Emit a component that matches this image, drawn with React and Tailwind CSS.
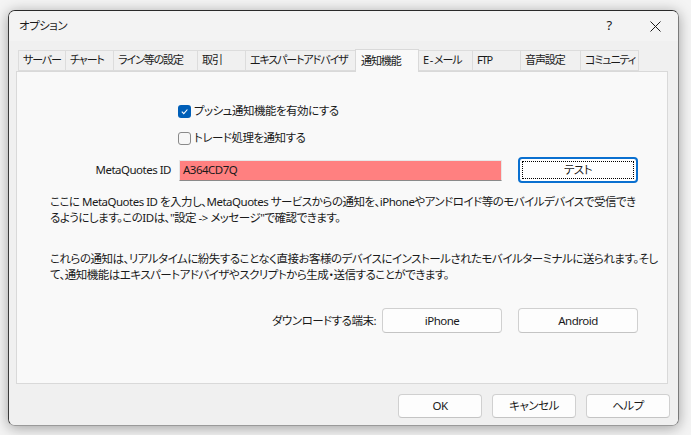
import React from "react";

const tabs = [
  { label: "サーバー", w: "w-[48px]" },
  { label: "チャート", w: "w-[49px]" },
  { label: "ライン等の設定", w: "w-[85px]" },
  { label: "取引", w: "w-[49px]" },
  { label: "エキスパートアドバイザ", w: "w-[111px]" },
  { label: "通知機能", w: "w-[64px]", active: true },
  { label: "E - メール", w: "w-[55px]" },
  { label: "FTP", w: "w-[49px]" },
  { label: "音声設定", w: "w-[61px]" },
  { label: "コミュニティ", w: "w-[59px]" },
];

const Checkbox = ({ checked, label }) => (
  <div className="flex items-center h-[20px] gap-[3px]">
    {checked ? (
      <div className="w-[13px] h-[13px] rounded-[3px] bg-[#005fb8] flex items-center justify-center">
        <svg width="9" height="9" viewBox="0 0 10 10">
          <path d="M2 5.2 L4.2 7.4 L8.2 2.8" fill="none" stroke="white" strokeWidth="1.2" />
        </svg>
      </div>
    ) : (
      <div className="w-[13px] h-[13px] rounded-[3px] border border-[#8a8a8a] bg-[#f7f7f7]" />
    )}
    <span>{label}</span>
  </div>
);

const Btn = ({ children, w = "w-[120px]", h = "h-[25px]" }) => (
  <div
    className={`${w} ${h} flex items-center justify-center rounded-[4px] border border-[#d0d0d0] border-b-[#c4c4c4] bg-[#fdfdfd] text-[#1a1a1a]`}
  >
    {children}
  </div>
);

const App = () => {
  return (
    <div
      className="w-[691px] h-[435px] bg-[#f4f4f4] overflow-hidden pt-[10px] pl-[8px] text-[11.5px] tracking-[-0.5px] text-[#1a1a1a] [font-feature-settings:'palt']"
      style={{ fontFamily: '"Noto Sans", "Noto Sans CJK JP", sans-serif' }}
    >
      {/* Dialog window */}
      <div className="w-[671px] h-[416px] flex flex-col rounded-[7px] overflow-hidden border border-t-[#2a2a2a] border-l-[#3a3a3a] border-r-[#7a7a7a] border-b-[#9a9a9a] shadow-[0_2px_14px_rgba(0,0,0,0.35)]">
        {/* Title bar */}
        <div className="h-[30px] bg-[#f3f3f3] flex items-center shrink-0">
          <span className="pl-[10px] flex-1">オプション</span>
          <div className="w-[46px] h-full flex items-center justify-center text-[13px]">?</div>
          <div className="w-[46px] h-full flex items-center justify-center">
            <svg width="11" height="11" viewBox="0 0 11 11">
              <path d="M0.5 0.5 L10.5 10.5 M10.5 0.5 L0.5 10.5" stroke="#1a1a1a" strokeWidth="1" />
            </svg>
          </div>
        </div>

        {/* Body */}
        <div className="flex-1 bg-[#f0f0f0] flex flex-col pt-[8px] pl-[7px] pr-[7px]">
          {/* Tabs */}
          <div className="flex items-end h-[22px] ml-[2px] text-[11px] tracking-[-1.1px]">
            {tabs.map((t) =>
              t.active ? (
                <div
                  key={t.label}
                  className={`${t.w} h-[23px] -mb-[1px] -ml-px relative z-10 bg-[#f9f9f9] border border-[#d9d9d9] border-b-0 flex items-center pl-[5px] whitespace-nowrap overflow-hidden`}
                >
                  {t.label}
                </div>
              ) : (
                <div
                  key={t.label}
                  className={`${t.w} h-[21px] bg-[#f0f0f0] border border-[#dcdcdc] -ml-px first:ml-0 flex items-center pl-[4px] whitespace-nowrap overflow-hidden`}
                >
                  {t.label}
                </div>
              )
            )}
          </div>

          {/* Panel */}
          <div className="w-[652px] h-[313px] bg-[#f9f9f9] border border-[#d9d9d9] flex flex-col">
            <div className="ml-[161px] mt-[29px]">
              <Checkbox checked label="プッシュ通知機能を有効にする" />
            </div>
            <div className="ml-[161px] mt-[7px]">
              <Checkbox label="トレード処理を通知する" />
            </div>

            <div className="flex items-center h-[26px] mt-[9px]">
              <div className="w-[154px] text-right">MetaQuotes ID</div>
              <div className="ml-[8px] w-[323px] h-[21px] bg-[#ff8080] border border-[#e7e7e7] border-b-[#8a8a8a] flex items-center pl-[3px]">
                A364CD7Q
              </div>
              <div className="ml-[16px] w-[120px] h-[26px] rounded-[4px] border-2 border-[#0a70d0] bg-white flex items-center justify-center relative">
                <div className="absolute inset-[2px] border border-dotted border-black" />
                テスト
              </div>
            </div>

            <p className="ml-[33px] mt-[11px] leading-[16px] whitespace-nowrap">
              ここに MetaQuotes ID を入力し、MetaQuotes サービスからの通知を、iPhoneやアンドロイド等のモバイルデバイスで受信でき
              <br />
              るようにします。このIDは、"設定 -&gt; メッセージ"で確認できます。
            </p>

            <p className="ml-[33px] mt-[25px] leading-[16px] whitespace-nowrap">
              これらの通知は、リアルタイムに紛失することなく直接お客様のデバイスにインストールされたモバイルターミナルに送られます。そし
              <br />
              て、通知機能はエキスパートアドバイザやスクリプトから生成・送信することができます。
            </p>

            <div className="flex items-center mt-[25px]">
              <div className="w-[359px] text-right">ダウンロードする端末:</div>
              <div className="ml-[6px]">
                <Btn>iPhone</Btn>
              </div>
              <div className="ml-[16px]">
                <Btn>Android</Btn>
              </div>
            </div>
          </div>

          {/* Bottom buttons */}
          <div className="flex justify-end gap-[10px] mt-[10px] pr-[1px]">
            <Btn w="w-[84px]" h="h-[24px]">OK</Btn>
            <Btn w="w-[84px]" h="h-[24px]">キャンセル</Btn>
            <Btn w="w-[84px]" h="h-[24px]">ヘルプ</Btn>
          </div>
        </div>
      </div>
    </div>
  );
};

export default App;
